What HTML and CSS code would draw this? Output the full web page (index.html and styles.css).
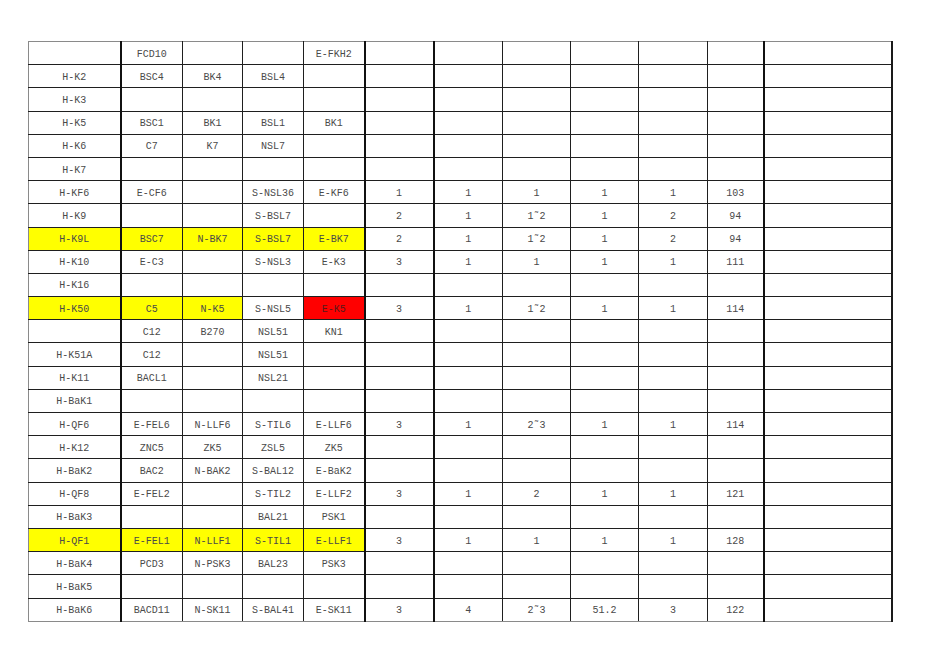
FILE: index.html
```html
<!DOCTYPE html>
<html>
<head>
<meta charset="utf-8">
<link rel="stylesheet" href="styles.css">
</head>
<body>
<table class="sheet">
<colgroup>
<col class="c1"><col class="c2"><col class="c3"><col class="c4"><col class="c5"><col class="c6"><col class="c7"><col class="c8"><col class="c9"><col class="c10"><col class="c11"><col class="c12">
</colgroup>
<tbody>
<tr><td></td><td>FCD10</td><td></td><td></td><td>E-FKH2</td><td></td><td></td><td></td><td></td><td></td><td></td><td></td></tr>
<tr><td>H-K2</td><td>BSC4</td><td>BK4</td><td>BSL4</td><td></td><td></td><td></td><td></td><td></td><td></td><td></td><td></td></tr>
<tr><td>H-K3</td><td></td><td></td><td></td><td></td><td></td><td></td><td></td><td></td><td></td><td></td><td></td></tr>
<tr><td>H-K5</td><td>BSC1</td><td>BK1</td><td>BSL1</td><td>BK1</td><td></td><td></td><td></td><td></td><td></td><td></td><td></td></tr>
<tr><td>H-K6</td><td>C7</td><td>K7</td><td>NSL7</td><td></td><td></td><td></td><td></td><td></td><td></td><td></td><td></td></tr>
<tr><td>H-K7</td><td></td><td></td><td></td><td></td><td></td><td></td><td></td><td></td><td></td><td></td><td></td></tr>
<tr><td>H-KF6</td><td>E-CF6</td><td></td><td>S-NSL36</td><td>E-KF6</td><td>1</td><td>1</td><td>1</td><td>1</td><td>1</td><td>103</td><td></td></tr>
<tr><td>H-K9</td><td></td><td></td><td>S-BSL7</td><td></td><td>2</td><td>1</td><td>1˜2</td><td>1</td><td>2</td><td>94</td><td></td></tr>
<tr><td class="y">H-K9L</td><td class="y">BSC7</td><td class="y">N-BK7</td><td class="y">S-BSL7</td><td class="y">E-BK7</td><td>2</td><td>1</td><td>1˜2</td><td>1</td><td>2</td><td>94</td><td></td></tr>
<tr><td>H-K10</td><td>E-C3</td><td></td><td>S-NSL3</td><td>E-K3</td><td>3</td><td>1</td><td>1</td><td>1</td><td>1</td><td>111</td><td></td></tr>
<tr><td>H-K16</td><td></td><td></td><td></td><td></td><td></td><td></td><td></td><td></td><td></td><td></td><td></td></tr>
<tr><td class="y">H-K50</td><td class="y">C5</td><td class="y">N-K5</td><td>S-NSL5</td><td class="r">E-K5</td><td>3</td><td>1</td><td>1˜2</td><td>1</td><td>1</td><td>114</td><td></td></tr>
<tr><td></td><td>C12</td><td>B270</td><td>NSL51</td><td>KN1</td><td></td><td></td><td></td><td></td><td></td><td></td><td></td></tr>
<tr><td>H-K51A</td><td>C12</td><td></td><td>NSL51</td><td></td><td></td><td></td><td></td><td></td><td></td><td></td><td></td></tr>
<tr><td>H-K11</td><td>BACL1</td><td></td><td>NSL21</td><td></td><td></td><td></td><td></td><td></td><td></td><td></td><td></td></tr>
<tr><td>H-BaK1</td><td></td><td></td><td></td><td></td><td></td><td></td><td></td><td></td><td></td><td></td><td></td></tr>
<tr><td>H-QF6</td><td>E-FEL6</td><td>N-LLF6</td><td>S-TIL6</td><td>E-LLF6</td><td>3</td><td>1</td><td>2˜3</td><td>1</td><td>1</td><td>114</td><td></td></tr>
<tr><td>H-K12</td><td>ZNC5</td><td>ZK5</td><td>ZSL5</td><td>ZK5</td><td></td><td></td><td></td><td></td><td></td><td></td><td></td></tr>
<tr><td>H-BaK2</td><td>BAC2</td><td>N-BAK2</td><td>S-BAL12</td><td>E-BaK2</td><td></td><td></td><td></td><td></td><td></td><td></td><td></td></tr>
<tr><td>H-QF8</td><td>E-FEL2</td><td></td><td>S-TIL2</td><td>E-LLF2</td><td>3</td><td>1</td><td>2</td><td>1</td><td>1</td><td>121</td><td></td></tr>
<tr><td>H-BaK3</td><td></td><td></td><td>BAL21</td><td>PSK1</td><td></td><td></td><td></td><td></td><td></td><td></td><td></td></tr>
<tr><td class="y">H-QF1</td><td class="y">E-FEL1</td><td class="y">N-LLF1</td><td class="y">S-TIL1</td><td class="y">E-LLF1</td><td>3</td><td>1</td><td>1</td><td>1</td><td>1</td><td>128</td><td></td></tr>
<tr><td>H-BaK4</td><td>PCD3</td><td>N-PSK3</td><td>BAL23</td><td>PSK3</td><td></td><td></td><td></td><td></td><td></td><td></td><td></td></tr>
<tr><td>H-BaK5</td><td></td><td></td><td></td><td></td><td></td><td></td><td></td><td></td><td></td><td></td><td></td></tr>
<tr><td>H-BaK6</td><td>BACD11</td><td>N-SK11</td><td>S-BAL41</td><td>E-SK11</td><td>3</td><td>4</td><td>2˜3</td><td>51.2</td><td>3</td><td>122</td><td></td></tr>
</tbody>
</table>
</body>
</html>
```
FILE: styles.css
```css
html, body {
  margin: 0;
  padding: 0;
  background: #ffffff;
}

body {
  padding: 41px 0 0 28px;
  font-family: "Liberation Mono", "DejaVu Sans Mono", monospace;
}

.sheet {
  border-collapse: collapse;
  table-layout: fixed;
  width: 864px;
  border-top: 1px solid #8a8a8a;
  border-left: 1px solid #8a8a8a;
  border-bottom: 1px solid #8a8a8a;
  border-right: 2px solid #1a1a1a;
}

.c1 { width: 92px; }
.c2 { width: 62px; }
.c3 { width: 60px; }
.c4 { width: 61px; }
.c5 { width: 61px; }
.c6 { width: 69px; }
.c7 { width: 69px; }
.c8 { width: 68px; }
.c9 { width: 68px; }
.c10 { width: 69px; }
.c11 { width: 56px; }
.c12 { width: 128px; }

.sheet td {
  height: 19.2px;
  padding: 3px 0 0 0;
  border: 1px solid #1f1f1f;
  text-align: center;
  vertical-align: middle;
  font-size: 10px;
  line-height: 12px;
  color: #4a4a4a;
  white-space: nowrap;
  overflow: hidden;
}

.sheet tr:first-child td { border-top-color: #8a8a8a; }
.sheet tr:last-child td { border-bottom-color: #8a8a8a; }
.sheet td:first-child { border-left-color: #8a8a8a; }

.sheet td:nth-child(2),
.sheet td:nth-child(6),
.sheet td:nth-child(7),
.sheet td:nth-child(12) {
  border-left-width: 2px;
  border-left-color: #111;
}

.sheet td:nth-child(9),
.sheet td:nth-child(11) {
  border-left-color: #9a9a9a;
}

.sheet td:last-child {
  border-right: 2px solid #1a1a1a;
}

.sheet td.y { background: #ffff00; }
.sheet td.r { background: #ff0000; color: #5a1a1a; }
```
